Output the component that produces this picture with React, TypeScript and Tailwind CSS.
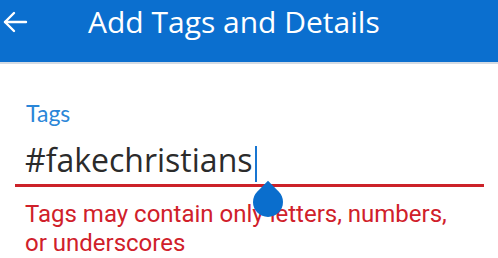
import React from 'react';

const BackArrow = () => (
  <svg width="26" height="24" viewBox="0 0 26 24" fill="none" stroke="white" strokeWidth="2.4" strokeLinecap="round" strokeLinejoin="round">
    <path d="M24 12H3" />
    <path d="M12 3 3 12l9 9" />
  </svg>
);

const App = () => {
  return (
    <div className="w-[498px] h-[258px] bg-white overflow-hidden relative">
      <header className="h-[64px] bg-[#0b6fcf] flex items-start border-b-2 border-[#d4dbe3] pt-[9px]">
        <div className="pl-[2px] pt-[1px]">
          <BackArrow />
        </div>
        <h1 className="ml-[60px] text-white text-[30px] leading-[26px] font-['Open_Sans',sans-serif]">
          Add Tags and Details
        </h1>
      </header>

      <main className="pt-[36px]">
        <label className="block pl-[26px] text-[23px] leading-[26px] text-[#2a86d8] font-['Lato',sans-serif]">
          Tags
        </label>
        <div className="mt-[9px] ml-[15px] mr-[14px] border-b-[3px] border-[#cc2229] pl-[10px] flex items-end h-[52px] pb-[8px]">
          <span className="text-[32px] leading-none text-[#2b2b2b] font-['Open_Sans',sans-serif]">#fakechristians</span>
          <span className="ml-[2px] mb-[-6px] w-[2px] h-[36px] bg-[#1876d2]" />
        </div>
        <p className="pl-[25px] pt-[13px] pr-[20px] text-[24px] leading-[29px] text-[#d0202a] font-['Roboto',sans-serif]">
          Tags may contain only letters, numbers,
          <br />
          or underscores
        </p>
      </main>

      <div className="absolute left-[253px] top-[187px] w-[30px] h-[30px] bg-[#0a6ecd] rounded-full rounded-tl-none rotate-45" />
    </div>
  );
};

export default App;
